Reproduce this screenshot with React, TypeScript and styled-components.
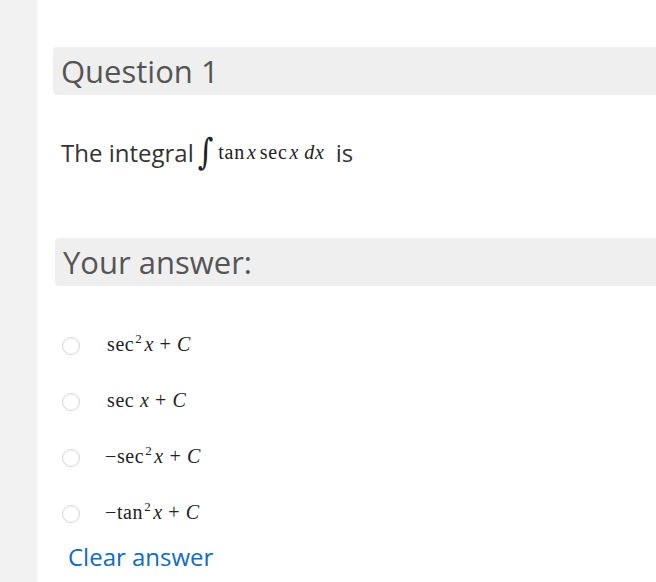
import * as React from 'react';
import styled, { createGlobalStyle } from 'styled-components';

const GlobalStyle = createGlobalStyle`
  html, body {
    margin: 0;
    padding: 0;
    background: #ffffff;
    font-family: "Open Sans", "Noto Sans", sans-serif;
  }
`;

const Page = styled.div`
  display: flex;
  width: 656px;
  height: 582px;
  overflow: hidden;
`;

const Sidebar = styled.div`
  width: 36px;
  flex-shrink: 0;
  background: #f2f2f2;
  border-right: 2px solid #f7f7f7;
`;

const Content = styled.div`
  flex: 1;
  padding: 47px 0 0 15px;
  display: flex;
  flex-direction: column;
`;

const Heading = styled.div<{ $indent: number; $top: number; $shift: number }>`
  height: 48px;
  margin: ${(p) => p.$top}px -4px 0 ${(p) => p.$shift}px;
  background: #efefef;
  border-radius: 4px 0 0 4px;
  display: flex;
  align-items: center;
  padding-left: ${(p) => p.$indent}px;
  font-size: 31px;
  color: #555555;
  box-sizing: border-box;
`;

const QuestionText = styled.div`
  margin: 37px 0 0 8px;
  height: 40px;
  display: flex;
  align-items: center;
  font-size: 24px;
  color: #333333;
`;

const MathInline = styled.span`
  font-family: "Liberation Serif", "DejaVu Serif", serif;
  font-size: 20px;
  color: #222222;
  display: inline-flex;
  align-items: center;
  margin: 0 8px 0 4px;
  letter-spacing: 0.8px;
`;

const IntegralSign = styled.span`
  font-family: "DejaVu Serif", serif;
  font-size: 30px;
  line-height: 1;
  margin-right: 4px;
  transform: scaleY(1.2);
`;

const Var = styled.i`
  font-style: italic;
  margin: 0 3px 0 2px;
`;

const Options = styled.div`
  display: flex;
  flex-direction: column;
  margin-top: 32px;
`;

const Option = styled.label`
  display: flex;
  align-items: center;
  height: 56px;
  padding-left: 9px;
`;

const Radio = styled.span`
  width: 16px;
  height: 16px;
  border-radius: 50%;
  border: 1px solid #d6d6d6;
  box-shadow: inset 0 1px 2px rgba(0, 0, 0, 0.06);
  background: #ffffff;
  flex-shrink: 0;
`;

const OptionMath = styled.span<{ $gap: number }>`
  margin: -4px 0 0 ${(p) => p.$gap}px;
  font-family: "Liberation Serif", "DejaVu Serif", serif;
  font-size: 20px;
  color: #222222;
  letter-spacing: 0.6px;
`;

const Sup = styled.sup`
  font-size: 13px;
  vertical-align: 8px;
  line-height: 0;
  margin: 0 2px 0 1px;
`;

const ClearLink = styled.a`
  margin: -2px 0 0 15px;
  font-size: 24px;
  line-height: 33px;
  color: #0f6cbf;
  text-decoration: none;
  cursor: pointer;
`;

const options = [
  { neg: false, fn: 'sec', sq: true, gap: 27 },
  { neg: false, fn: 'sec', sq: false, gap: 27 },
  { neg: true, fn: 'sec', sq: true, gap: 25 },
  { neg: true, fn: 'tan', sq: true, gap: 25 },
];

const App = () => (
  <>
    <GlobalStyle />
    <Page>
      <Sidebar />
      <Content>
        <Heading $indent={8} $top={0} $shift={0}>Question 1</Heading>
        <QuestionText>
          The integral
          <MathInline>
            <IntegralSign>∫</IntegralSign>
            tan<Var>x</Var>sec<Var>x</Var>
            <Var>dx</Var>
          </MathInline>
          is
        </QuestionText>
        <Heading $indent={8} $top={66} $shift={2}>Your answer:</Heading>
        <Options>
          {options.map((o, i) => (
            <Option key={i}>
              <Radio />
              <OptionMath $gap={o.gap}>
                {o.neg ? '\u2212' : ''}
                {o.fn}
                {o.sq ? <Sup>2</Sup> : ' '}
                <i>x</i> + <i>C</i>
              </OptionMath>
            </Option>
          ))}
        </Options>
        <ClearLink>Clear answer</ClearLink>
      </Content>
    </Page>
  </>
);

export default App;
